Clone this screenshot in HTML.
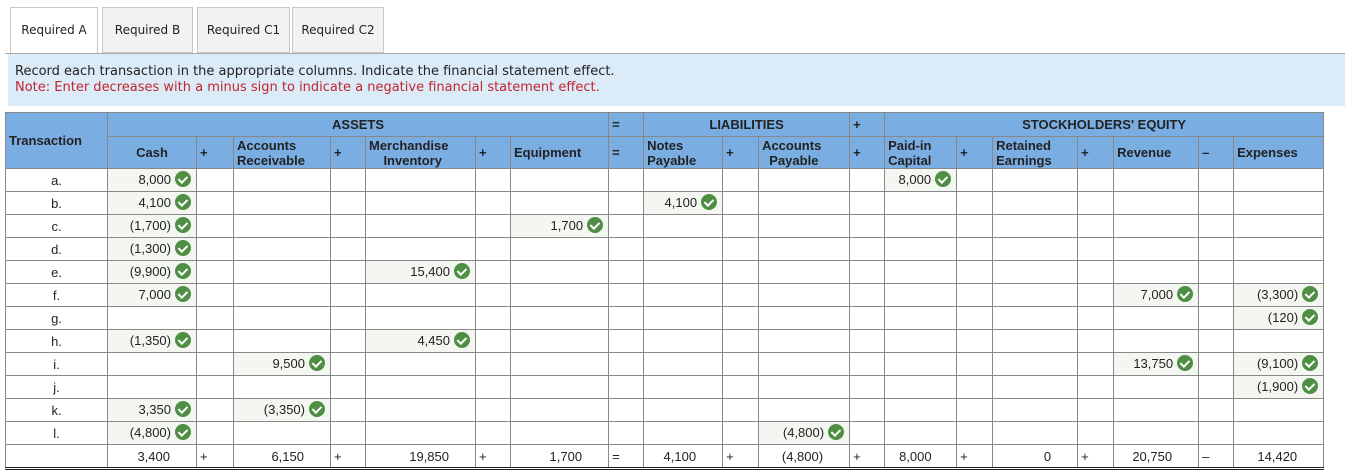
<!DOCTYPE html>
<html><head><meta charset="utf-8"><style>
body{margin:0;background:#fff;width:1345px;height:474px;overflow:hidden;font-family:"Liberation Sans",Arial,sans-serif;}
.tab{position:absolute;top:7px;height:46px;box-sizing:border-box;border:1px solid #c8c8c8;background:#f2f2f2;font-family:"DejaVu Sans",sans-serif;font-size:12px;color:#222;text-align:center;line-height:44px;}
.tab.a{background:#fff;border-bottom:none;height:48px;}
.line{position:absolute;left:5px;right:0;top:53px;border-top:1px solid #aaa;}
.info{position:absolute;left:8px;right:0;top:54px;height:52px;background:#dcebf8;font-family:"DejaVu Sans",sans-serif;font-size:13px;padding:10px 0 0 7px;box-sizing:border-box;line-height:16px;color:#222;}
.info .n{color:#c0262d;}
table{position:absolute;left:5px;top:112px;border-collapse:collapse;table-layout:fixed;width:1318px;font-size:13px;color:#222;}
td,th{border:1px solid #888;padding:0 3px;overflow:hidden;white-space:nowrap;}
th{background:#7aaee3;font-weight:bold;font-size:13px;line-height:15px;color:#222;}
tr.h1 th{height:23px;}
tr.h2 th{height:31px;}
td{height:22px;text-align:right;}
td.t{text-align:center;}
td.f{background:#f4f7f1;padding-right:5px;}
.c{display:inline-block;width:16px;height:16px;border-radius:50%;background:#4f8f44;vertical-align:middle;margin-left:4px;position:relative;top:-1px;}
.c:after{content:"";position:absolute;left:5px;top:3px;width:3.5px;height:7px;border:solid #fff;border-width:0 2.5px 2.5px 0;transform:rotate(45deg);}
tr.tot td{border-bottom:3px double #222;border-top:1.5px solid #222;}
td.op{text-align:left;}
th.l{text-align:left}
</style></head><body>
<div class="tab a" style="left:10px;width:88px">Required A</div>
<div class="tab" style="left:102px;width:91px">Required B</div>
<div class="tab" style="left:197px;width:93px">Required C1</div>
<div class="tab" style="left:292px;width:92px">Required C2</div>
<div class="line"></div>
<div class="info">Record each transaction in the appropriate columns. Indicate the financial statement effect.<br><span class="n">Note: Enter decreases with a minus sign to indicate a negative financial statement effect.</span></div>
<table>
<colgroup><col style="width:102px"><col style="width:89px"><col style="width:37px"><col style="width:97px"><col style="width:35px"><col style="width:110px"><col style="width:35px"><col style="width:98px"><col style="width:35px"><col style="width:79px"><col style="width:36px"><col style="width:91px"><col style="width:35px"><col style="width:72px"><col style="width:36px"><col style="width:85px"><col style="width:36px"><col style="width:85px"><col style="width:35px"><col style="width:90px"></colgroup>
<tr class="h1"><th rowspan="2" class="l" style="vertical-align:top;padding-top:20px">Transaction</th><th colspan="7">ASSETS</th><th class="l">=</th><th colspan="3">LIABILITIES</th><th class="l">+</th><th colspan="7">STOCKHOLDERS' EQUITY</th></tr>
<tr class="h2"><th>Cash</th><th class="l">+</th><th class="l">Accounts<br>Receivable</th><th class="l">+</th><th class="l">Merchandise<br>&nbsp;&nbsp;&nbsp;&nbsp;Inventory</th><th class="l">+</th><th class="l">Equipment</th><th class="l">=</th><th class="l">Notes<br>Payable</th><th class="l">+</th><th class="l">Accounts<br>&nbsp;&nbsp;Payable</th><th class="l">+</th><th class="l">Paid-in<br>Capital</th><th class="l">+</th><th class="l">Retained<br>Earnings</th><th class="l">+</th><th class="l">Revenue</th><th class="l">–</th><th class="l">Expenses</th></tr>
<tr><td class="t">a.</td><td class="f">8,000<i class="c"></i></td><td></td><td></td><td></td><td></td><td></td><td></td><td></td><td></td><td></td><td></td><td></td><td class="f">8,000<i class="c"></i></td><td></td><td></td><td></td><td></td><td></td><td></td></tr>
<tr><td class="t">b.</td><td class="f">4,100<i class="c"></i></td><td></td><td></td><td></td><td></td><td></td><td></td><td></td><td class="f">4,100<i class="c"></i></td><td></td><td></td><td></td><td></td><td></td><td></td><td></td><td></td><td></td><td></td></tr>
<tr><td class="t">c.</td><td class="f">(1,700)<i class="c"></i></td><td></td><td></td><td></td><td></td><td></td><td class="f">1,700<i class="c"></i></td><td></td><td></td><td></td><td></td><td></td><td></td><td></td><td></td><td></td><td></td><td></td><td></td></tr>
<tr><td class="t">d.</td><td class="f">(1,300)<i class="c"></i></td><td></td><td></td><td></td><td></td><td></td><td></td><td></td><td></td><td></td><td></td><td></td><td></td><td></td><td></td><td></td><td></td><td></td><td></td></tr>
<tr><td class="t">e.</td><td class="f">(9,900)<i class="c"></i></td><td></td><td></td><td></td><td class="f">15,400<i class="c"></i></td><td></td><td></td><td></td><td></td><td></td><td></td><td></td><td></td><td></td><td></td><td></td><td></td><td></td><td></td></tr>
<tr><td class="t">f.</td><td class="f">7,000<i class="c"></i></td><td></td><td></td><td></td><td></td><td></td><td></td><td></td><td></td><td></td><td></td><td></td><td></td><td></td><td></td><td></td><td class="f">7,000<i class="c"></i></td><td></td><td class="f">(3,300)<i class="c"></i></td></tr>
<tr><td class="t">g.</td><td></td><td></td><td></td><td></td><td></td><td></td><td></td><td></td><td></td><td></td><td></td><td></td><td></td><td></td><td></td><td></td><td></td><td></td><td class="f">(120)<i class="c"></i></td></tr>
<tr><td class="t">h.</td><td class="f">(1,350)<i class="c"></i></td><td></td><td></td><td></td><td class="f">4,450<i class="c"></i></td><td></td><td></td><td></td><td></td><td></td><td></td><td></td><td></td><td></td><td></td><td></td><td></td><td></td><td></td></tr>
<tr><td class="t">i.</td><td></td><td></td><td class="f">9,500<i class="c"></i></td><td></td><td></td><td></td><td></td><td></td><td></td><td></td><td></td><td></td><td></td><td></td><td></td><td></td><td class="f">13,750<i class="c"></i></td><td></td><td class="f">(9,100)<i class="c"></i></td></tr>
<tr><td class="t">j.</td><td></td><td></td><td></td><td></td><td></td><td></td><td></td><td></td><td></td><td></td><td></td><td></td><td></td><td></td><td></td><td></td><td></td><td></td><td class="f">(1,900)<i class="c"></i></td></tr>
<tr><td class="t">k.</td><td class="f">3,350<i class="c"></i></td><td></td><td class="f">(3,350)<i class="c"></i></td><td></td><td></td><td></td><td></td><td></td><td></td><td></td><td></td><td></td><td></td><td></td><td></td><td></td><td></td><td></td><td></td></tr>
<tr><td class="t">l.</td><td class="f">(4,800)<i class="c"></i></td><td></td><td></td><td></td><td></td><td></td><td></td><td></td><td></td><td></td><td class="f">(4,800)<i class="c"></i></td><td></td><td></td><td></td><td></td><td></td><td></td><td></td><td></td></tr>
<tr class="tot"><td></td><td style="padding-right:26px">3,400</td><td class="op">+</td><td style="padding-right:26px">6,150</td><td class="op">+</td><td style="padding-right:26px">19,850</td><td class="op">+</td><td style="padding-right:26px">1,700</td><td class="op">=</td><td style="padding-right:26px">4,100</td><td class="op">+</td><td style="padding-right:26px">(4,800)</td><td class="op">+</td><td style="text-align:left;padding-left:14px">8,000</td><td class="op">+</td><td style="padding-right:26px">0</td><td class="op">+</td><td style="padding-right:26px">20,750</td><td class="op">–</td><td style="padding-right:26px">14,420</td></tr>
</table>
</body></html>
